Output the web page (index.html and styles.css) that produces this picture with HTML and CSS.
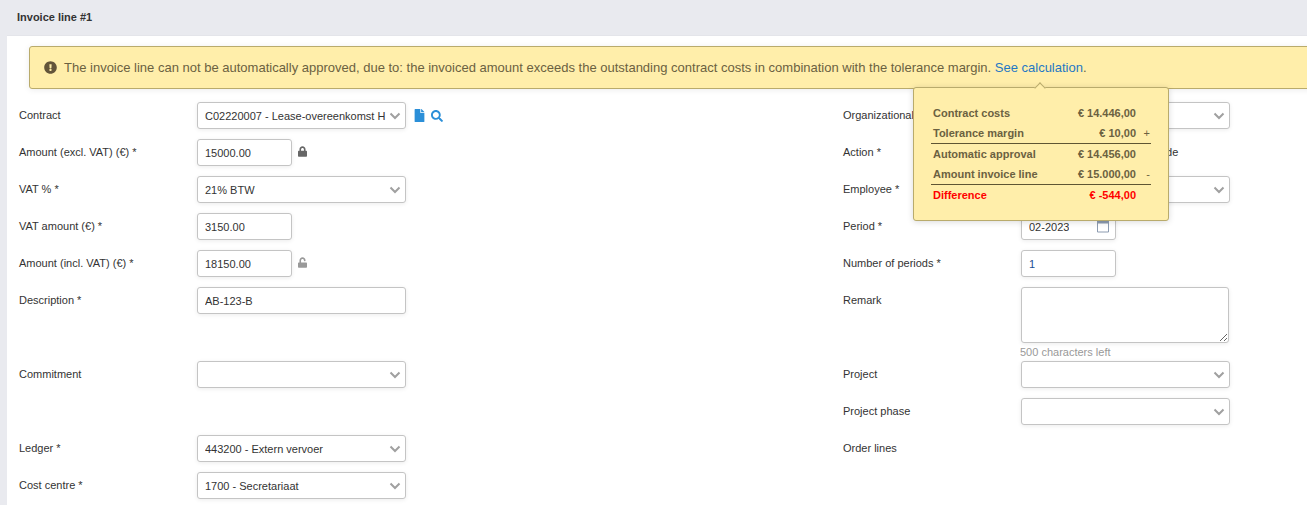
FILE: index.html
```html
<!DOCTYPE html>
<html lang="en">
<head>
<meta charset="utf-8">
<title>Invoice line</title>
<link rel="stylesheet" href="styles.css">
</head>
<body>
<main class="panel">
  <header class="panel-head">Invoice line #1</header>
  <div class="alert">
    <svg class="alert-icon" viewBox="0 0 512 512"><path d="M504 256c0 136.997-111.043 248-248 248S8 392.997 8 256C8 119.083 119.043 8 256 8s248 111.083 248 248zm-248 50c-25.405 0-46 20.595-46 46s20.595 46 46 46 46-20.595 46-46-20.595-46-46-46zm-43.673-165.346l7.418 136c.347 6.364 5.609 11.346 11.982 11.346h48.546c6.373 0 11.635-4.982 11.982-11.346l7.418-136c.375-6.874-5.098-12.654-11.982-12.654h-63.383c-6.884 0-12.356 5.78-11.981 12.654z"/></svg>
    <span>The invoice line can not be automatically approved, due to: the invoiced amount exceeds the outstanding contract costs in combination with the tolerance margin. <a class="alert-link">See calculation</a>.</span>
  </div>

  <div class="popover">
    <div class="pop-row"><span class="pop-name">Contract costs</span><span class="pop-val">€ 14.446,00</span><span class="pop-sign"></span></div>
    <div class="pop-row pop-sum"><span class="pop-name">Tolerance margin</span><span class="pop-val">€ 10,00</span><span class="pop-sign">+</span></div>
    <div class="pop-row"><span class="pop-name">Automatic approval</span><span class="pop-val">€ 14.456,00</span><span class="pop-sign"></span></div>
    <div class="pop-row pop-sum"><span class="pop-name">Amount invoice line</span><span class="pop-val">€ 15.000,00</span><span class="pop-sign">-</span></div>
    <div class="pop-row pop-diff"><span class="pop-name">Difference</span><span class="pop-val">€ -544,00</span><span class="pop-sign"></span></div>
  </div>

  <div class="form">
    <div class="col">
      <div class="row"><label class="lab">Contract</label>
        <div class="field sel"><span class="val">C02220007 - Lease-overeenkomst H</span><svg class="chev" viewBox="0 0 12 8"><path d="M1.5 1.5 6 6l4.5-4.5"/></svg></div>
        <svg class="ic ic-blue ic-file" viewBox="0 0 384 512"><path d="M224 136V0H24C10.7 0 0 10.7 0 24v464c0 13.3 10.7 24 24 24h336c13.3 0 24-10.7 24-24V160H248c-13.2 0-24-10.8-24-24zm160-14.1v6.1H256V0h6.1c6.4 0 12.5 2.5 17 7l97.9 98c4.5 4.5 7 10.6 7 16.9z"/></svg>
        <svg class="ic ic-blue ic-search" viewBox="0 0 512 512"><path d="M505 442.7L405.3 343c-4.5-4.5-10.6-7-17-7H372c27.6-35.3 44-79.7 44-128C416 93.1 322.9 0 208 0S0 93.1 0 208s93.1 208 208 208c48.3 0 92.7-16.4 128-44v16.3c0 6.4 2.5 12.5 7 17l99.7 99.7c9.4 9.4 24.6 9.4 33.9 0l28.3-28.3c9.4-9.4 9.4-24.6.1-34zM208 336c-70.7 0-128-57.2-128-128 0-70.7 57.2-128 128-128 70.7 0 128 57.2 128 128 0 70.7-57.2 128-128 128z"/></svg>
      </div>
      <div class="row"><label class="lab">Amount (excl. VAT) (€) *</label>
        <div class="field small"><span class="val">15000.00</span></div>
        <svg class="ic ic-lock" viewBox="0 0 448 512"><path d="M400 224h-24v-72C376 68.2 307.8 0 224 0S72 68.2 72 152v72H48c-26.5 0-48 21.5-48 48v192c0 26.5 21.5 48 48 48h352c26.5 0 48-21.5 48-48V272c0-26.5-21.5-48-48-48zm-104 0H152v-72c0-39.7 32.3-72 72-72s72 32.3 72 72v72z"/></svg>
      </div>
      <div class="row"><label class="lab">VAT % *</label>
        <div class="field sel"><span class="val">21% BTW</span><svg class="chev" viewBox="0 0 12 8"><path d="M1.5 1.5 6 6l4.5-4.5"/></svg></div>
      </div>
      <div class="row"><label class="lab">VAT amount (€) *</label>
        <div class="field small"><span class="val">3150.00</span></div>
      </div>
      <div class="row"><label class="lab">Amount (incl. VAT) (€) *</label>
        <div class="field small"><span class="val">18150.00</span></div>
        <svg class="ic ic-lock ic-open" viewBox="0 0 448 512"><path d="M400 256H152V152.9c0-39.6 31.7-72.5 71.3-72.9 40-.4 72.7 32.1 72.7 72v16c0 13.3 10.7 24 24 24h32c13.3 0 24-10.7 24-24v-16C376 68 307.5-.3 223.5 0 139.5.3 72 69.5 72 153.5V256H48c-26.5 0-48 21.5-48 48v160c0 26.5 21.5 48 48 48h352c26.5 0 48-21.5 48-48V304c0-26.5-21.5-48-48-48z"/></svg>
      </div>
      <div class="row"><label class="lab">Description *</label>
        <div class="field"><span class="val">AB-123-B</span></div>
      </div>
      <div class="row"></div>
      <div class="row"><label class="lab">Commitment</label>
        <div class="field sel"><span class="val"></span><svg class="chev" viewBox="0 0 12 8"><path d="M1.5 1.5 6 6l4.5-4.5"/></svg></div>
      </div>
      <div class="row"></div>
      <div class="row"><label class="lab">Ledger *</label>
        <div class="field sel"><span class="val">443200 - Extern vervoer</span><svg class="chev" viewBox="0 0 12 8"><path d="M1.5 1.5 6 6l4.5-4.5"/></svg></div>
      </div>
      <div class="row"><label class="lab">Cost centre *</label>
        <div class="field sel"><span class="val">1700 - Secretariaat</span><svg class="chev" viewBox="0 0 12 8"><path d="M1.5 1.5 6 6l4.5-4.5"/></svg></div>
      </div>
    </div>

    <div class="col">
      <div class="row"><label class="lab">Organizational unit</label>
        <div class="field sel"><span class="val"></span><svg class="chev" viewBox="0 0 12 8"><path d="M1.5 1.5 6 6l4.5-4.5"/></svg></div>
      </div>
      <div class="row"><label class="lab">Action *</label>
        <span class="plain">Approve invoice lines and code</span>
      </div>
      <div class="row"><label class="lab">Employee *</label>
        <div class="field sel"><span class="val"></span><svg class="chev" viewBox="0 0 12 8"><path d="M1.5 1.5 6 6l4.5-4.5"/></svg></div>
      </div>
      <div class="row"><label class="lab">Period *</label>
        <div class="field small"><span class="val">02-2023</span>
          <svg class="cal" viewBox="0 0 12 13"><path d="M.5 1.5h11v11H.5z"/><path class="cal-top" d="M2.5 0h1.5v2h-1.5zM8 0h1.5v2H8zM1 1.5h10v2.5H1z"/></svg>
        </div>
      </div>
      <div class="row"><label class="lab">Number of periods *</label>
        <div class="field small"><span class="val val-blue">1</span></div>
      </div>
      <div class="row row-area"><label class="lab">Remark</label>
        <div class="area-wrap">
          <textarea class="area" aria-label="Remark"></textarea>
          <div class="hint">500 characters left</div>
        </div>
      </div>
      <div class="row"><label class="lab">Project</label>
        <div class="field sel"><span class="val"></span><svg class="chev" viewBox="0 0 12 8"><path d="M1.5 1.5 6 6l4.5-4.5"/></svg></div>
      </div>
      <div class="row"><label class="lab">Project phase</label>
        <div class="field sel"><span class="val"></span><svg class="chev" viewBox="0 0 12 8"><path d="M1.5 1.5 6 6l4.5-4.5"/></svg></div>
      </div>
      <div class="row"><label class="lab">Order lines</label></div>
    </div>
  </div>
</main>
</body>
</html>
```
FILE: styles.css
```css
* { box-sizing: border-box; }
html, body { margin: 0; height: 505px; overflow: hidden; background: #fff; }
body {
  font-family: "Liberation Sans", Arial, sans-serif;
  font-size: 11px;
  color: #333;
  padding-left: 7px;
}
.panel { position: relative; height: 505px; box-shadow: -7px 0 0 #e9eaef; }
.panel-head {
  height: 36px;
  background: #e9eaef;
  border-bottom: 1px solid #e4e5ea;
  padding: 11px 10px 0;
  font-weight: 700;
  font-size: 11px;
  line-height: 13px;
  color: #333;
}
.alert {
  margin: 10px -10px 0 22px;
  height: 43px;
  background: #ffeeaa;
  border: 1px solid #b9ab6c;
  border-radius: 3px;
  box-shadow: 0 1px 6px rgba(0,0,0,.08);
  display: flex;
  align-items: center;
  padding-left: 14px;
  font-size: 13px;
  color: #6b6141;
  white-space: nowrap;
}
.alert-icon { width: 13px; height: 13px; fill: #63553a; margin-right: 7px; flex: none; }
.alert-link { color: #1f78c4; }
.popover {
  position: absolute;
  left: 906px;
  top: 87px;
  width: 256px;
  height: 134px;
  background: #ffeeaa;
  border: 1px solid #b9ab6c;
  border-radius: 3px;
  box-shadow: 0 1px 6px rgba(0,0,0,.15);
  padding: 15px 17px 0 17px;
  z-index: 2;
  font-weight: 700;
  color: #6b6141;
}
.popover::before {
  content: "";
  position: absolute;
  left: 122px;
  top: -4px;
  width: 7px;
  height: 7px;
  background: #ffeeaa;
  border-left: 1px solid #b9ab6c;
  border-top: 1px solid #b9ab6c;
  transform: rotate(45deg);
}
.pop-row { display: flex; height: 20.5px; align-items: center; padding: 0 0 0 2px; }
.pop-name { flex: 1; }
.pop-val { text-align: right; }
.pop-sign { width: 15px; text-align: right; padding-right: 1px; font-weight: 400; }
.pop-sum { border-bottom: 1px solid #5f5533; }
.pop-diff { color: #f00; }
.form { display: grid; grid-template-columns: 824px 1fr; padding: 13px 0 0 12px; }
.col { display: flex; flex-direction: column; }
.row { display: flex; align-items: flex-start; height: 27px; margin-bottom: 10px; flex: none; }
.row-area { height: 64px; }
.lab { width: 178px; flex: none; padding-top: 7px; line-height: 13px; color: #333; }
.field {
  position: relative;
  width: 209px;
  height: 27px;
  background: #fff;
  border: 1px solid #c4c4c4;
  border-radius: 3px;
  box-shadow: 0 1px 4px rgba(0,0,0,.08);
  padding: 0 7px;
  display: flex;
  align-items: center;
  flex: none;
  color: #333;
  line-height: 13px;
}
.small { width: 95px; }
.val { display: block; overflow: hidden; white-space: nowrap; padding-top: 1px; }
.sel .val { width: 181px; }
.val-blue { color: #1c4f93; }
.chev { position: absolute; right: 4px; top: 9px; width: 12px; height: 8px; fill: none; stroke: #a0a0a0; stroke-width: 2; }
.ic { flex: none; }
.ic-blue { fill: #2b8fd8; }
.ic-file { width: 11px; height: 13px; margin: 7px 0 0 8px; }
.ic-search { width: 12px; height: 12px; margin: 8px 0 0 6px; }
.ic-lock { width: 9px; height: 11px; margin: 7px 0 0 6px; fill: #666; }
.ic-open { fill: #999; }
.cal { position: absolute; right: 6px; top: 5px; width: 12px; height: 14px; fill: none; stroke: #8c9bb0; }
.cal-top { fill: #8c9bb0; stroke: none; }
.plain { padding: 7px 0 0 5px; line-height: 13px; white-space: nowrap; }
.area-wrap { width: 209px; flex: none; }
.area {
  display: block;
  width: 208px;
  height: 56px;
  border: 1px solid #c4c4c4;
  border-radius: 3px;
  box-shadow: 0 1px 4px rgba(0,0,0,.08);
  background: #fff;
  padding: 4px 7px;
  margin: 0;
  font: inherit;
  outline: 0;
}
.hint { color: #999; font-size: 11px; line-height: 13px; margin: 3px 0 0 -1px; }
```
